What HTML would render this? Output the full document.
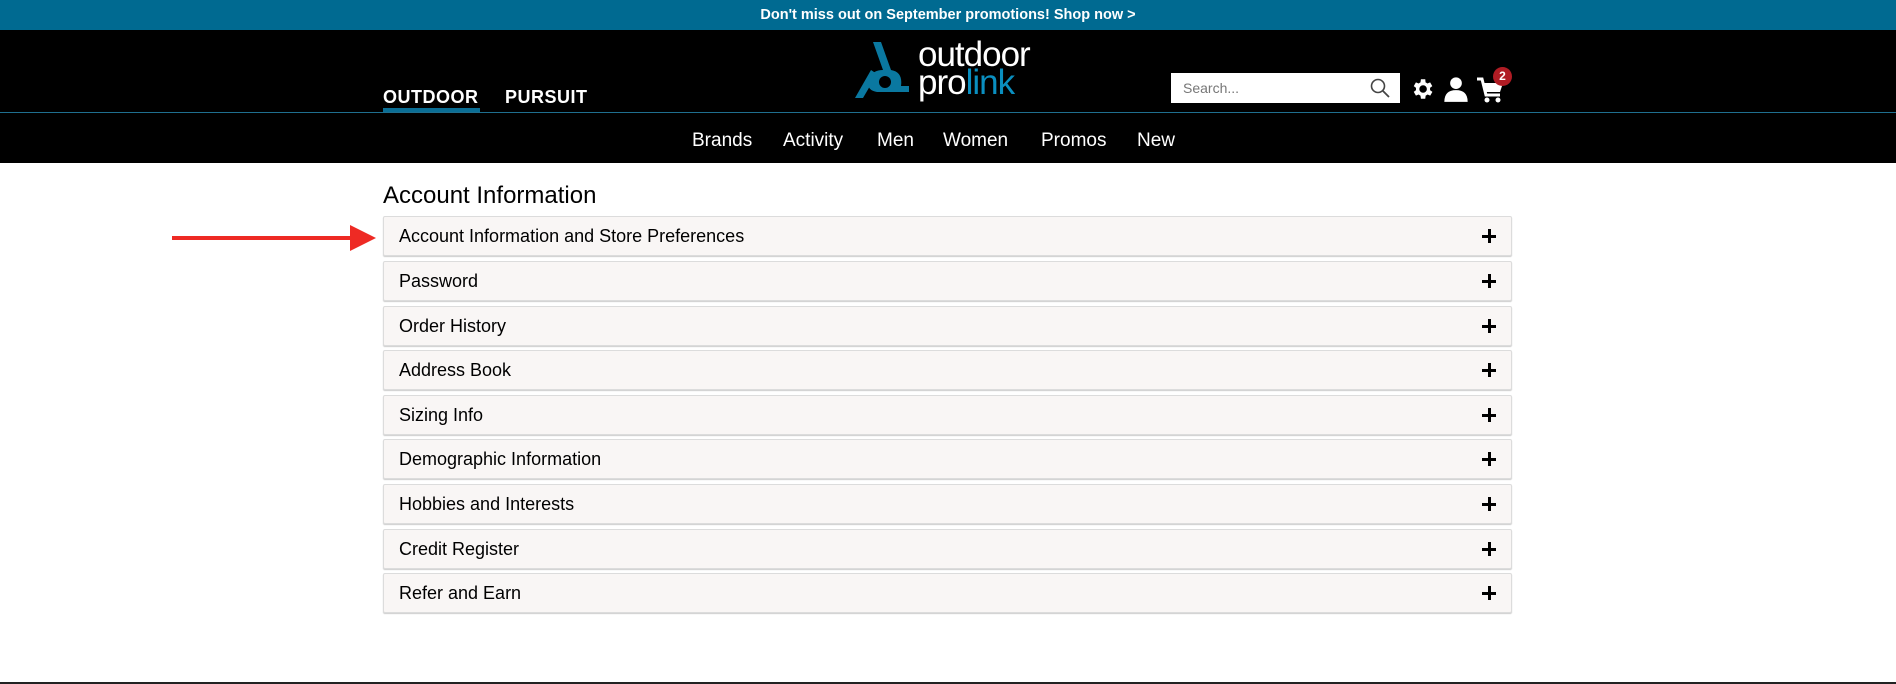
<!DOCTYPE html>
<html><head><meta charset="utf-8"><style>
*{margin:0;padding:0;box-sizing:border-box}
body{width:1896px;height:684px;background:#fff;font-family:"Liberation Sans",sans-serif;position:relative;overflow:hidden}
.banner{position:absolute;top:0;left:0;width:1896px;height:30px;background:#006a91;color:#fff;font-size:14.5px;font-weight:bold;text-align:center;line-height:30px}
.hdr{position:absolute;top:30px;left:0;width:1896px;height:133px;background:#000}
.line{position:absolute;left:0;width:1896px;height:1px;background:#1f6f8f}
.tab{position:absolute;top:57px;color:#fff;font-weight:bold;font-size:18px;letter-spacing:0.5px}
.ul{position:absolute;left:383px;width:97px;height:4px;background:#0a6e95}
.nav{position:absolute;top:130px;color:#fff;font-size:19px}
.search{position:absolute;left:1171px;top:73px;width:229px;height:30px;background:#fff}
.search span{position:absolute;left:12px;top:7px;font-size:14px;color:#777}
h1{position:absolute;left:383px;top:182px;font-size:24px;font-weight:normal;color:#000}
.row{position:absolute;left:383px;width:1129px;height:40px;background:#f9f6f5;border:1px solid #dcdcdc;border-radius:2px;box-shadow:0 1px 1px #ccc}
.row span{position:absolute;left:15px;top:9px;font-size:18px;color:#000}
.row i{position:absolute;right:15px;top:12px;width:14px;height:14px}
.row i:before{content:"";position:absolute;left:0;top:5.5px;width:14px;height:3px;background:#000}
.row i:after{content:"";position:absolute;top:0;left:5.5px;width:3px;height:14px;background:#000}
</style></head><body>
<div class="banner">Don't miss out on September promotions! Shop now &gt;</div>
<div class="hdr">
 <div class="tab" style="left:383px">OUTDOOR</div>
 <div class="tab" style="left:505px">PURSUIT</div>
 <div class="ul" style="top:78px"></div>
 <div class="line" style="top:82px"></div>
</div>
<svg style="position:absolute;left:851px;top:40px" width="62" height="60" viewBox="0 0 62 60"><path d="M22 2 L30 2 L40 30 Q52 32 50 46 L58 46 L58 52 L26 52 Q14 50 18 38 Q22 30 32 30 Z" fill="#0a78a0"/><path d="M20 30 L4 58 L12 58 L26 34Z" fill="#0a78a0"/><circle cx="34" cy="42" r="6" fill="#000"/></svg>
<div style="position:absolute;left:918px;top:38px;color:#fff;font-size:35px;letter-spacing:-1px;line-height:34px">outdoor</div>
<div style="position:absolute;left:918px;top:66px;font-size:35px;letter-spacing:-1px;line-height:34px"><span style="color:#fff">pro</span><span style="color:#0a8fc0">link</span></div>
<div class="search"><span>Search...</span>
<svg style="position:absolute;right:10px;top:5px" width="20" height="20" viewBox="0 0 20 20"><circle cx="8" cy="8" r="6.5" fill="none" stroke="#444" stroke-width="1.6"/><path d="M13 13 L19 19" stroke="#444" stroke-width="1.8"/></svg></div>
<svg style="position:absolute;left:1409px;top:76px" width="26" height="26" viewBox="0 0 24 24"><path fill="#fff" d="M19.4 13a7.5 7.5 0 000-2l2.1-1.6-2-3.5-2.5 1a7 7 0 00-1.7-1L15 3h-4l-.4 2.9a7 7 0 00-1.7 1l-2.5-1-2 3.5L6.5 11a7.5 7.5 0 000 2l-2.1 1.6 2 3.5 2.5-1a7 7 0 001.7 1L11 21h4l.4-2.9a7 7 0 001.7-1l2.5 1 2-3.5zM13 15.5a3.5 3.5 0 110-7 3.5 3.5 0 010 7z"/></svg>
<svg style="position:absolute;left:1442px;top:75px" width="28" height="28" viewBox="0 0 24 24"><circle cx="12" cy="7" r="5" fill="#fff"/><path d="M2 23 Q2 13 12 13 Q22 13 22 23Z" fill="#fff"/></svg>
<svg style="position:absolute;left:1476px;top:77px" width="30" height="27" viewBox="0 0 30 27"><path d="M1 2 H6 L10 18 H24" stroke="#fff" stroke-width="3" fill="none"/><path d="M7 6 H27 L24 15 H9Z" fill="#fff"/><circle cx="11" cy="23" r="2.5" fill="#fff"/><circle cx="22" cy="23" r="2.5" fill="#fff"/></svg>
<div style="position:absolute;left:1493px;top:67px;width:19px;height:19px;border-radius:50%;background:#b01c24;color:#fff;font-size:12px;font-weight:bold;text-align:center;line-height:19px">2</div>
<div class="nav" style="left:692px">Brands</div>
<div class="nav" style="left:783px">Activity</div>
<div class="nav" style="left:877px">Men</div>
<div class="nav" style="left:943px">Women</div>
<div class="nav" style="left:1041px">Promos</div>
<div class="nav" style="left:1137px">New</div>
<h1>Account Information</h1>
<div class="row" style="top:216px"><span>Account Information and Store Preferences</span><i></i></div>
<div class="row" style="top:261px"><span>Password</span><i></i></div>
<div class="row" style="top:306px"><span>Order History</span><i></i></div>
<div class="row" style="top:350px"><span>Address Book</span><i></i></div>
<div class="row" style="top:395px"><span>Sizing Info</span><i></i></div>
<div class="row" style="top:439px"><span>Demographic Information</span><i></i></div>
<div class="row" style="top:484px"><span>Hobbies and Interests</span><i></i></div>
<div class="row" style="top:529px"><span>Credit Register</span><i></i></div>
<div class="row" style="top:573px"><span>Refer and Earn</span><i></i></div>
<svg style="position:absolute;left:170px;top:223px" width="210" height="30" viewBox="0 0 210 30"><rect x="2" y="13" width="180" height="4" fill="#ee2a24"/><path d="M180 2 L206 15 L180 28Z" fill="#ee2a24"/></svg>
<div style="position:absolute;left:0;top:682px;width:1896px;height:2px;background:#222"></div>
</body></html>
